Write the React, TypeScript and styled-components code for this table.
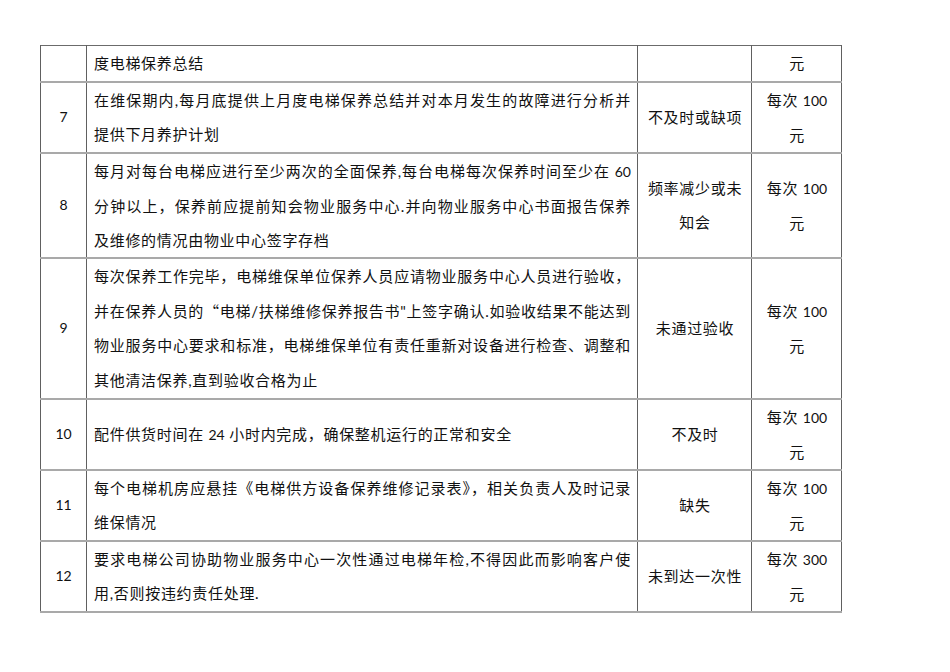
import React from "react";
import styled, { createGlobalStyle } from "styled-components";

const GlobalStyle = createGlobalStyle`
  html, body {
    margin: 0;
    padding: 0;
    background: #ffffff;
  }
  body {
    font-family: "Lato", "Noto Sans CJK SC", sans-serif;
    color: #000;
  }
`;

const Page = styled.div`
  width: 950px;
  height: 672px;
  padding: 45px 0 0 40px;
  box-sizing: border-box;
  background: #fff;
`;

const Sheet = styled.table`
  border-collapse: collapse;
  table-layout: fixed;
  width: 801px;
  border-top: 1px solid #6b6b6b;
`;

const Row = styled.tr<{ $h: number }>`
  height: ${(p) => p.$h}px;
`;

const Cell = styled.td<{ $align?: "left" | "center"; $lh?: number }>`
  border-left: 1px solid #606060;
  border-right: 1px solid #606060;
  border-bottom: 2px solid #a9a9a9;
  padding: 0 6px 0 7px;
  vertical-align: middle;
  text-align: ${(p) => p.$align ?? "center"};
  font-size: 15px;
  letter-spacing: 0.7px;
  line-height: ${(p) => p.$lh ?? 34}px;
  color: #111;
`;

const NoCell = styled(Cell)`
  font-family: "Lato", sans-serif;
  font-size: 14px;
  letter-spacing: 0;
  padding: 0;
`;

const Line = styled.span<{ $justify?: boolean }>`
  display: block;
  white-space: nowrap;
  text-align: ${(p) => (p.$justify ? "justify" : "inherit")};
  text-align-last: ${(p) => (p.$justify ? "justify" : "auto")};
`;

const Latin = styled.span`
  font-family: "Lato", sans-serif;
  font-size: 14px;
  letter-spacing: 0;
`;

const Quote = styled.span`
  font-family: "Noto Sans CJK SC", sans-serif;
`;

interface Item {
  no: string;
  text: string[];
  issue: string[];
  fine: string[];
  h: number;
  lh?: number;
}

const items: Item[] = [
  { no: "", text: ["度电梯保养总结"], issue: [], fine: ["元"], h: 36 },
  {
    no: "7",
    text: ["在维保期内,每月底提供上月度电梯保养总结并对本月发生的故障进行分析并", "提供下月养护计划"],
    issue: ["不及时或缺项"],
    fine: ["每次 100", "元"],
    h: 69,
  },
  {
    no: "8",
    text: [
      "每月对每台电梯应进行至少两次的全面保养,每台电梯每次保养时间至少在 60",
      "分钟以上，保养前应提前知会物业服务中心.并向物业服务中心书面报告保养",
      "及维修的情况由物业中心签字存档",
    ],
    issue: ["频率减少或未", "知会"],
    fine: ["每次 100", "元"],
    h: 104,
  },
  {
    no: "9",
    text: [
      "每次保养工作完毕，电梯维保单位保养人员应请物业服务中心人员进行验收，",
      "并在保养人员的“电梯/扶梯维修保养报告书\"上签字确认.如验收结果不能达到",
      "物业服务中心要求和标准，电梯维保单位有责任重新对设备进行检查、调整和",
      "其他清洁保养,直到验收合格为止",
    ],
    issue: ["未通过验收"],
    fine: ["每次 100", "元"],
    h: 141,
    lh: 34.5,
  },
  {
    no: "10",
    text: ["配件供货时间在 24 小时内完成，确保整机运行的正常和安全"],
    issue: ["不及时"],
    fine: ["每次 100", "元"],
    h: 71,
  },
  {
    no: "11",
    text: ["每个电梯机房应悬挂《电梯供方设备保养维修记录表》，相关负责人及时记录", "维保情况"],
    issue: ["缺失"],
    fine: ["每次 100", "元"],
    h: 70,
  },
  {
    no: "12",
    text: ["要求电梯公司协助物业服务中心一次性通过电梯年检,不得因此而影响客户使", "用,否则按违约责任处理."],
    issue: ["未到达一次性"],
    fine: ["每次 300", "元"],
    h: 69,
  },
];

// digits go in the latin face without CJK tracking, the opening quote in the CJK face
function runs(s: string) {
  return s.split(/(\d+|“)/).map((part, i) => {
    if (/^\d+$/.test(part)) return <Latin key={i}>{part}</Latin>;
    if (part === "“") return <Quote key={i}>{part}</Quote>;
    return <React.Fragment key={i}>{part}</React.Fragment>;
  });
}

export default function App() {
  return (
    <Page>
      <GlobalStyle />
      <Sheet>
        <colgroup>
          <col style={{ width: 46 }} />
          <col style={{ width: 551 }} />
          <col style={{ width: 114 }} />
          <col style={{ width: 90 }} />
        </colgroup>
        <tbody>
          {items.map((it, r) => (
            <Row key={r} $h={it.h}>
              <NoCell>{it.no}</NoCell>
              <Cell $align="left" $lh={it.lh}>
                {it.text.map((t, i) => (
                  <Line key={i} $justify={i < it.text.length - 1}>
                    {runs(t)}
                  </Line>
                ))}
              </Cell>
              <Cell>
                {it.issue.map((t, i) => (
                  <Line key={i}>{t}</Line>
                ))}
              </Cell>
              <Cell>
                {it.fine.map((t, i) => (
                  <Line key={i}>{runs(t)}</Line>
                ))}
              </Cell>
            </Row>
          ))}
        </tbody>
      </Sheet>
    </Page>
  );
}
